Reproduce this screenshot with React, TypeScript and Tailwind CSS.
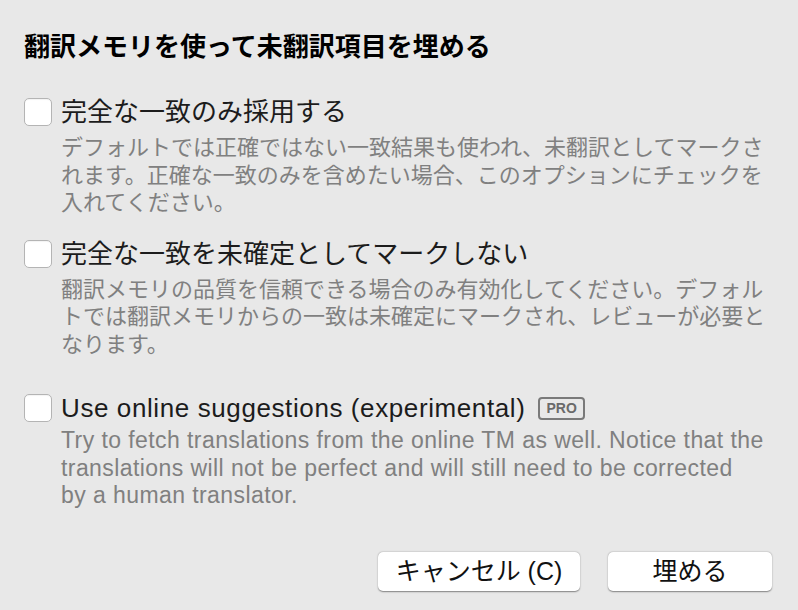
import React from "react"

const font = { fontFamily: '"Liberation Sans", "Noto Sans CJK JP", sans-serif' }

function Checkbox() {
  return <div className="w-[28px] h-[28px] shrink-0 rounded-[5px] bg-white border border-[#b4b4b4] shadow-[inset_0_1px_1px_rgba(0,0,0,0.05)]" />
}

function Option({
  label,
  lines,
  badge,
  latin,
  className,
}: {
  label: string
  lines: string[]
  badge?: boolean
  latin?: boolean
  className?: string
}) {
  return (
    <div className={className}>
      <div className="flex items-center gap-[9px] h-[30px]">
        <Checkbox />
        <span
          className={
            latin
              ? "text-[26px] leading-[30px] tracking-[0.6px] text-[#1c1c1c] whitespace-nowrap"
              : "text-[26px] leading-[30px] text-[#1c1c1c] whitespace-nowrap"
          }
        >
          {label}
        </span>
        {badge && (
          <span className="ml-[4px] h-[23px] px-[6px] flex items-center rounded-[4px] border-2 border-[#7a7a7a] text-[14px] font-bold text-[#6a6a6a] leading-none">
            PRO
          </span>
        )}
      </div>
      <div
        className={
          latin
            ? "ml-[37px] mt-[4px] text-[23px] leading-[27.5px] tracking-[0.42px] text-[#808080] whitespace-nowrap"
            : "ml-[37px] mt-[7px] text-[22px] leading-[27.5px] text-[#808080] whitespace-nowrap"
        }
      >
        {lines.map((l) => (
          <div key={l}>{l}</div>
        ))}
      </div>
    </div>
  )
}

export default function App() {
  return (
    <div className="w-[798px] h-[610px] bg-[#e8e8e8] flex flex-col px-[24px] pt-[32px]" style={font}>
      <h1 className="text-[26px] leading-[30px] font-bold text-black">翻訳メモリを使って未翻訳項目を埋める</h1>

      <Option
        className="mt-[35px]"
        label="完全な一致のみ採用する"
        lines={[
          "デフォルトでは正確ではない一致結果も使われ、未翻訳としてマークさ",
          "れます。正確な一致のみを含めたい場合、このオプションにチェックを",
          "入れてください。",
        ]}
      />
      <Option
        className="mt-[22px]"
        label="完全な一致を未確定としてマークしない"
        lines={[
          "翻訳メモリの品質を信頼できる場合のみ有効化してください。デフォル",
          "トでは翻訳メモリからの一致は未確定にマークされ、レビューが必要と",
          "なります。",
        ]}
      />
      <Option
        className="mt-[35px]"
        label="Use online suggestions (experimental)"
        badge
        latin
        lines={[
          "Try to fetch translations from the online TM as well. Notice that the",
          "translations will not be perfect and will still need to be corrected",
          "by a human translator.",
        ]}
      />

      <div className="mt-auto mb-[19px] flex justify-end gap-[28px] pr-[2px]">
        <button className="w-[202px] h-[39px] rounded-[5px] bg-white text-[25px] text-[#111] leading-none shadow-[0_0.5px_1.5px_rgba(0,0,0,0.45)]">
          キャンセル (C)
        </button>
        <button className="w-[164px] h-[39px] rounded-[5px] bg-white text-[25px] text-[#111] leading-none shadow-[0_0.5px_1.5px_rgba(0,0,0,0.45)]">
          埋める
        </button>
      </div>
    </div>
  )
}
